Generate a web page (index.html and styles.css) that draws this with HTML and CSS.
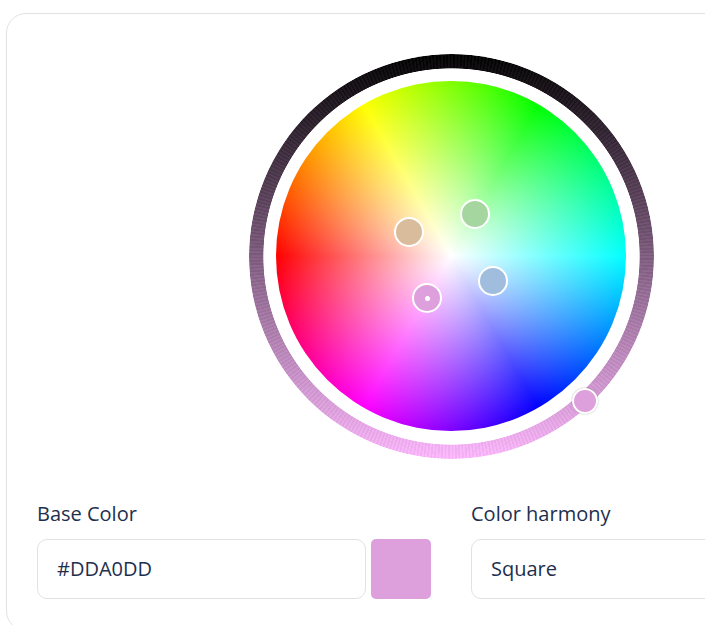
FILE: index.html
```html
<!DOCTYPE html>
<html lang="en">
<head>
    <meta charset="UTF-8">
    <meta name="viewport" content="width=device-width, initial-scale=1.0">
    <title>Color Wheel</title>
    <link rel="stylesheet" href="styles.css">
</head>
<body>
    <div class="card">
        <div class="picker">
            <div class="ring"></div>
            <div class="wheel"></div>
            <div class="marker marker-tan"></div>
            <div class="marker marker-green"></div>
            <div class="marker marker-blue"></div>
            <div class="marker marker-base"><span class="marker-dot"></span></div>
            <div class="ring-thumb"></div>
        </div>
        <div class="fields">
            <div class="field">
                <label class="field-label">Base Color</label>
                <div class="field-row">
                    <div class="input input-color">#DDA0DD</div>
                    <div class="swatch"></div>
                </div>
            </div>
            <div class="field">
                <label class="field-label">Color harmony</label>
                <div class="input input-harmony">Square</div>
            </div>
        </div>
    </div>
</body>
</html>
```

FILE: styles.css
```css
html, body {
    height: 100%;
    overflow: hidden;
}

body {
    font-family: "Open Sans", sans-serif;
    background-color: #ffffff;
    color: #1e2f4d;
    margin: 0;
    padding: 13px 0 0 6px;
    box-sizing: border-box;
}

.card {
    width: 890px;
    height: 618px;
    box-sizing: border-box;
    padding: 40px 30px 0;
    background: #ffffff;
    border: 1px solid #e2e2e2;
    border-radius: 20px;
}

.picker {
    position: relative;
    width: 405px;
    height: 405px;
    margin-left: 212px;
}

.ring {
    position: absolute;
    inset: 0;
    border-radius: 50%;
    background:
        repeating-conic-gradient(rgba(255, 255, 255, 0.04) 0 0.5deg, rgba(0, 0, 0, 0.04) 0.5deg 1deg),
        linear-gradient(to bottom, #000000, #ffb9ff);
    -webkit-mask: radial-gradient(circle, transparent 187.8px, #000 188.5px);
    mask: radial-gradient(circle, transparent 187.8px, #000 188.5px);
    filter: blur(0.4px);
}

.wheel {
    position: absolute;
    left: 27px;
    top: 27px;
    width: 350px;
    height: 350px;
    border-radius: 50%;
    background:
        radial-gradient(circle, #ffffff 0, rgba(255, 255, 255, 0) 70.7%),
        conic-gradient(from 270deg, #ff0000, #ffff00, #00ff00, #00ffff, #0000ff, #ff00ff, #ff0000);
}

.marker {
    position: absolute;
    width: 30px;
    height: 30px;
    box-sizing: border-box;
    border: 2px solid #ffffff;
    border-radius: 50%;
    display: flex;
    align-items: center;
    justify-content: center;
}

.marker-tan {
    left: 145px;
    top: 163px;
    background: #d9bc9b;
}

.marker-green {
    left: 211px;
    top: 145px;
    background: #a5d6a0;
}

.marker-blue {
    left: 229px;
    top: 212px;
    background: #a0bddd;
}

.marker-base {
    left: 163px;
    top: 229px;
    background: #dda0dd;
}

.marker-dot {
    width: 5px;
    height: 5px;
    border-radius: 50%;
    background: #ffffff;
}

.ring-thumb {
    position: absolute;
    left: 323px;
    top: 334px;
    width: 26px;
    height: 26px;
    box-sizing: border-box;
    border: 2px solid #ffffff;
    border-radius: 50%;
    background: #dda0dd;
    box-shadow: 0 0 2px rgba(0, 0, 0, 0.3);
}

.fields {
    display: flex;
    gap: 40px;
    margin-top: 41px;
}

.field-label {
    display: block;
    font-size: 20px;
    line-height: 27px;
    margin-bottom: 12px;
}

.field-row {
    display: flex;
    gap: 5px;
}

.input {
    height: 60px;
    box-sizing: border-box;
    padding: 0 19px 2px;
    display: flex;
    align-items: center;
    font-size: 20px;
    background: #ffffff;
    border: 1px solid #e2e2e2;
    border-radius: 10px;
}

.input-color {
    width: 329px;
}

.input-harmony {
    width: 329px;
}

.swatch {
    width: 60px;
    height: 60px;
    background: #dda0dd;
    border-radius: 5px;
}
```
